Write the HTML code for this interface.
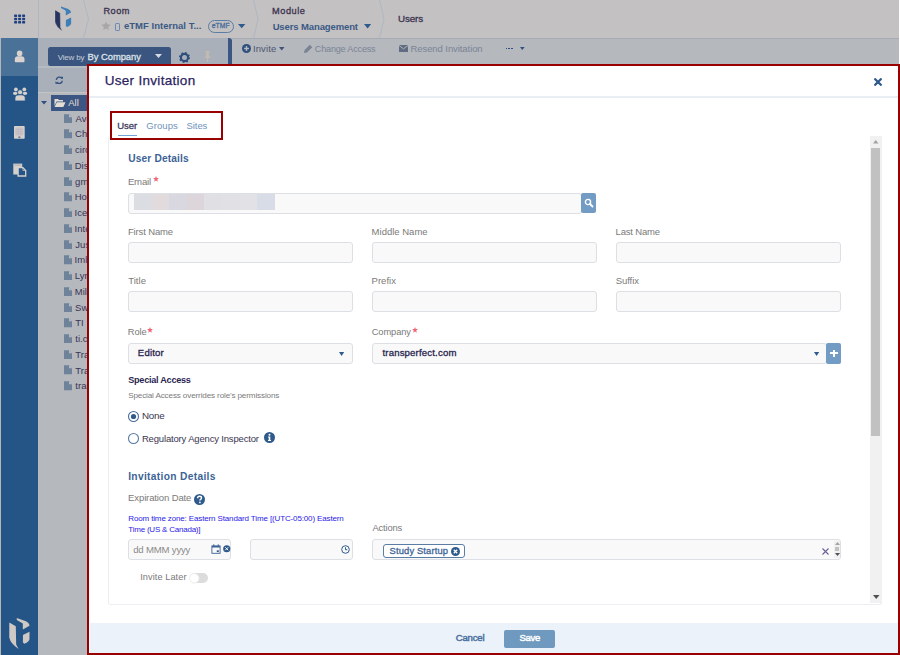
<!DOCTYPE html>
<html><head><meta charset="utf-8"><style>
html,body{margin:0;padding:0;width:900px;height:655px;overflow:hidden;position:relative;}
body{font-family:"Liberation Sans", sans-serif;}
.t{position:absolute;white-space:nowrap;}
.r{position:absolute;}
</style></head><body>
<div class="r" style="left:0px;top:0px;width:900px;height:655px;background:#b8babe"></div>
<div class="r" style="left:0px;top:0px;width:899px;height:38px;background:#c3c1c2"></div>
<div class="r" style="left:899px;top:0px;width:1px;height:64px;background:#ffffff"></div>
<div class="r" style="left:38px;top:0px;width:1px;height:38px;background:#adb7c4"></div>
<svg class="r" style="left:0;top:0" width="900" height="38"><g fill="none" stroke="#adb7c4" stroke-width="1"><polyline points="83.5,0 88.5,19 83.5,38"/><polyline points="253.5,0 258,19 253.5,38"/><polyline points="379.5,0 384,19 379.5,38"/></g></svg>
<svg class="r" style="left:0;top:0" width="38" height="38"><rect x="14.1" y="14.5" width="3" height="2.4" rx="0.6" fill="#203f80"/><rect x="14.1" y="17.8" width="3" height="2.4" rx="0.6" fill="#203f80"/><rect x="14.1" y="21.1" width="3" height="2.4" rx="0.6" fill="#203f80"/><rect x="18.1" y="14.5" width="3" height="2.4" rx="0.6" fill="#203f80"/><rect x="18.1" y="17.8" width="3" height="2.4" rx="0.6" fill="#203f80"/><rect x="18.1" y="21.1" width="3" height="2.4" rx="0.6" fill="#203f80"/><rect x="22.1" y="14.5" width="3" height="2.4" rx="0.6" fill="#203f80"/><rect x="22.1" y="17.8" width="3" height="2.4" rx="0.6" fill="#203f80"/><rect x="22.1" y="21.1" width="3" height="2.4" rx="0.6" fill="#203f80"/></svg>
<svg class="r" style="left:50px;top:4px" width="30" height="30" viewBox="0 0 30 30"><path d="M5,6 L10.2,9 L10.5,23.5 L12.4,27 Q6,23 5,18 Z" fill="#27345f" stroke="#d6d0cc" stroke-width="0.6" stroke-opacity="0.5"/><path d="M11,2.4 L18.3,5 Q21.1,6.5 21.1,8.5 L15.8,11.6 L15.8,6.8 L11,4 Z" fill="#3f7fb8"/><path d="M15.9,16 L21.1,13.4 L21.1,19.2 Q21,21.5 17,22.9 L15.9,22 Z" fill="#3f7fb8"/></svg>
<div class="t" style="left:103.44px;top:6.51px;font-size:9.2px;line-height:9.2px;color:#3b3350;letter-spacing:0.472px;-webkit-text-stroke:0.3px #3b3350;">Room</div>
<svg class="r" style="left:101.3px;top:21.3px" width="10" height="10" viewBox="0 0 24 24"><path d="M12 1l3.3 7 7.7.9-5.7 5.2 1.6 7.6L12 17.9 5.1 21.7l1.6-7.6L1 8.9 8.7 8z" fill="#a9a6a6"/></svg>
<div class="r" style="left:114.8px;top:22.7px;width:5.2px;height:8px;border:1.3px solid #6a8ab3;border-top-width:1.8px;border-bottom-width:1.8px;border-radius:1.2px;box-sizing:border-box"></div>
<div class="t" style="left:123.92px;top:21.26px;font-size:9.5px;line-height:9.5px;color:#3a5a85;font-weight:700;letter-spacing:0.027px;">eTMF Internal T...</div>
<div class="r" style="left:207.5px;top:20px;width:26.5px;height:13px;border:1px solid #5a7ca5;border-radius:7px;box-sizing:border-box"></div>
<div class="t" style="left:211.71px;top:22.84px;font-size:6.8px;line-height:6.8px;color:#4d6e99;letter-spacing:0.104px;-webkit-text-stroke:0.3px #4d6e99;">eTMF</div>
<svg class="r" style="left:237.5px;top:24px" width="8" height="5"><path d="M0,0 L7.4,0 L3.7,4.3 Z" fill="#2f5a8c"/></svg>
<div class="t" style="left:272.04px;top:6.61px;font-size:9.2px;line-height:9.2px;color:#3b3350;letter-spacing:0.559px;-webkit-text-stroke:0.3px #3b3350;">Module</div>
<div class="t" style="left:272.63px;top:21.56px;font-size:9.5px;line-height:9.5px;color:#3a5a85;font-weight:700;letter-spacing:-0.115px;">Users Management</div>
<svg class="r" style="left:363.8px;top:24.2px" width="8" height="5"><path d="M0,0 L7.2,0 L3.6,4.5 Z" fill="#2f5a8c"/></svg>
<div class="t" style="left:398.04px;top:13.90px;font-size:9.8px;line-height:9.8px;color:#3b3350;letter-spacing:-0.125px;-webkit-text-stroke:0.3px #3b3350;">Users</div>
<div class="r" style="left:0px;top:38px;width:38px;height:617px;background:#255586"></div>
<div class="r" style="left:0px;top:38px;width:1px;height:617px;background:#b3b5b8"></div>
<div class="r" style="left:1px;top:38px;width:37px;height:38px;background:#4a7198"></div>
<div class="r" style="left:38px;top:38px;width:1px;height:617px;background:#8fa0b4"></div>
<div class="r" style="left:39px;top:38px;width:1px;height:617px;background:#c5c5c7"></div>
<svg class="r" style="left:0px;top:38px" width="38" height="38" viewBox="0 0 38 38"><circle cx="19.6" cy="15.4" r="2.8" fill="#d9d2ce"/><path d="M14.8,23.6 Q14.8,24.2 15.5,24.2 H23.8 Q24.5,24.2 24.5,23.6 V21.5 Q24.5,18.2 21.3,18.2 H18 Q14.8,18.2 14.8,21.5 Z" fill="#d9d2ce"/></svg>
<svg class="r" style="left:12px;top:87px" width="16" height="15" viewBox="0 0 16 15"><circle cx="3.9" cy="2.4" r="1.9" fill="#d6d0cd"/><circle cx="12.3" cy="2.4" r="1.9" fill="#d6d0cd"/><ellipse cx="3.2" cy="6.3" rx="2.3" ry="1.6" fill="#d6d0cd"/><ellipse cx="13" cy="6.3" rx="2.3" ry="1.6" fill="#d6d0cd"/><circle cx="8.1" cy="5.3" r="2.5" fill="#d6d0cd" stroke="#255586" stroke-width="0.7"/><path d="M3,13.9 V10.8 Q3,7.9 6,7.9 H10.2 Q13.2,7.9 13.2,10.8 V13.9 Z" fill="#d6d0cd" stroke="#255586" stroke-width="0.7"/></svg>
<svg class="r" style="left:14px;top:125.5px" width="11" height="13" viewBox="0 0 11 13"><rect x="0" y="0" width="10.7" height="12.8" rx="0.8" fill="#d6d0cd"/><rect x="1.4" y="1.5" width="7.9" height="8" fill="#c9c3c6"/><path d="M1.4,3.5 H9.3 M1.4,5.5 H9.3 M1.4,7.5 H9.3 M4,1.5 V9.5 M6.7,1.5 V9.5" stroke="#b9b6c0" stroke-width="0.5"/><ellipse cx="5.35" cy="11.1" rx="1.3" ry="0.7" fill="#2a5a88"/></svg>
<svg class="r" style="left:13px;top:163px" width="14" height="14" viewBox="0 0 14 14"><rect x="0.3" y="0.6" width="8.9" height="10.9" fill="#d6d0cd"/><rect x="1.3" y="1.3" width="6.9" height="1.6" fill="#bdb8bb"/><path d="M5.1,4.6 H9.9 L12.7,7.4 V13 H5.1 Z" fill="#255586" stroke="#d6d0cd" stroke-width="1.3"/><path d="M9.9,4.6 V7.4 H12.7" fill="none" stroke="#d6d0cd" stroke-width="0.8"/></svg>
<svg class="r" style="left:2.5px;top:615.4px" width="37.65" height="37.65" viewBox="0 0 30 30"><path d="M5,6 L10.2,9 L10.5,23.5 L12.4,27 Q6,23 5,18 Z" fill="#cfc9c6"/><path d="M11,2.4 L18.3,5 Q21.1,6.5 21.1,8.5 L15.8,11.6 L15.8,6.8 L11,4 Z" fill="#cfc9c6"/><path d="M15.9,16 L21.1,13.4 L21.1,19.2 Q21,21.5 17,22.9 L15.9,22 Z" fill="#cfc9c6"/></svg>
<div class="r" style="left:38px;top:38px;width:190px;height:54px;background:#a9b0b9"></div>
<div class="r" style="left:38px;top:92px;width:190px;height:1px;background:#c3c4c6"></div>
<div class="r" style="left:38px;top:93px;width:190px;height:562px;background:#b5b8bd"></div>
<div class="r" style="left:38px;top:66px;width:190px;height:2px;background:#b6bbc2"></div>
<div class="r" style="left:48px;top:47px;width:123px;height:19px;background:#3a5580;border-radius:2.5px"></div>
<div class="t" style="left:57.76px;top:53.53px;font-size:8px;line-height:8px;color:#c9cfd9;letter-spacing:-0.200px;">View by</div>
<div class="t" style="left:87.62px;top:52.44px;font-size:9.4px;line-height:9.4px;color:#dde1e8;letter-spacing:-0.046px;-webkit-text-stroke:0.3px #dde1e8;">By Company</div>
<svg class="r" style="left:155px;top:54px" width="8" height="5"><path d="M0,0 L7,0 L3.5,4 Z" fill="#d5dae2"/></svg>
<svg class="r" style="left:179px;top:51.5px" width="11" height="11" viewBox="0 0 11 11"><circle cx="5.5" cy="5.5" r="3.6" fill="none" stroke="#2f4f7e" stroke-width="2.2"/><circle cx="5.5" cy="5.5" r="4.6" fill="none" stroke="#2f4f7e" stroke-width="1.8" stroke-dasharray="1.6 2.01"/></svg>
<svg class="r" style="left:203px;top:51px" width="9" height="11" viewBox="0 0 9 11"><path d="M2,0 H7 V1 H6 V5 L8,7 H1 L3,5 V1 H2 Z" fill="#c4bab4"/><rect x="4" y="7" width="1" height="4" fill="#c4bab4"/></svg>
<svg class="r" style="left:54.6px;top:75.6px" width="8.6" height="8.6" viewBox="0 0 10 10"><path d="M1.5,4.5 A3.5,3.5 0 0 1 8,3" fill="none" stroke="#2f4f7e" stroke-width="1.6"/><path d="M8.5,5.5 A3.5,3.5 0 0 1 2,7" fill="none" stroke="#2f4f7e" stroke-width="1.6"/><path d="M6.5,1 L9.5,1 L9.5,4 Z" fill="#2f4f7e"/><path d="M3.5,9 L0.5,9 L0.5,6 Z" fill="#2f4f7e"/></svg>
<svg class="r" style="left:41px;top:101px" width="6" height="4"><path d="M0,0 L6,0 L3,3.5 Z" fill="#2f4f7e"/></svg>
<div class="r" style="left:51px;top:95px;width:40px;height:16px;background:#3b5682"></div>
<svg class="r" style="left:54px;top:98px" width="12" height="10" viewBox="0 0 12 10"><path d="M0.5,1 H4 L5,2 H9 V3.5 H2.5 L0.5,8 Z" fill="#e3ddd4"/><path d="M2.8,4.3 H11.5 L9.3,9 H0.6 Z" fill="#e3ddd4"/></svg>
<div class="t" style="left:68.18px;top:98.37px;font-size:9.6px;line-height:9.6px;color:#e3ddd4;letter-spacing:0.046px;">All</div>
<svg class="r" style="left:64px;top:113.6px" width="8.2" height="9.4" viewBox="0 0 9 10"><path d="M0,0 H5.5 L9,3.5 V10 H0 Z" fill="#6e8399"/><path d="M5.5,0 V3.5 H9 Z" fill="#b5bcc4"/></svg>
<div class="t" style="left:75.48px;top:113.66px;font-size:9.5px;line-height:9.5px;color:#3a3356;">Avengers</div>
<svg class="r" style="left:64px;top:129.3px" width="8.2" height="9.4" viewBox="0 0 9 10"><path d="M0,0 H5.5 L9,3.5 V10 H0 Z" fill="#6e8399"/><path d="M5.5,0 V3.5 H9 Z" fill="#b5bcc4"/></svg>
<div class="t" style="left:75.03px;top:129.40px;font-size:9.5px;line-height:9.5px;color:#3a3356;">Chicago</div>
<svg class="r" style="left:64px;top:145.1px" width="8.2" height="9.4" viewBox="0 0 9 10"><path d="M0,0 H5.5 L9,3.5 V10 H0 Z" fill="#6e8399"/><path d="M5.5,0 V3.5 H9 Z" fill="#b5bcc4"/></svg>
<div class="t" style="left:75.10px;top:145.14px;font-size:9.5px;line-height:9.5px;color:#3a3356;">circle</div>
<svg class="r" style="left:64px;top:160.8px" width="8.2" height="9.4" viewBox="0 0 9 10"><path d="M0,0 H5.5 L9,3.5 V10 H0 Z" fill="#6e8399"/><path d="M5.5,0 V3.5 H9 Z" fill="#b5bcc4"/></svg>
<div class="t" style="left:74.72px;top:160.88px;font-size:9.5px;line-height:9.5px;color:#3a3356;">Discovery</div>
<svg class="r" style="left:64px;top:176.6px" width="8.2" height="9.4" viewBox="0 0 9 10"><path d="M0,0 H5.5 L9,3.5 V10 H0 Z" fill="#6e8399"/><path d="M5.5,0 V3.5 H9 Z" fill="#b5bcc4"/></svg>
<div class="t" style="left:75.10px;top:176.62px;font-size:9.5px;line-height:9.5px;color:#3a3356;">gmail</div>
<svg class="r" style="left:64px;top:192.3px" width="8.2" height="9.4" viewBox="0 0 9 10"><path d="M0,0 H5.5 L9,3.5 V10 H0 Z" fill="#6e8399"/><path d="M5.5,0 V3.5 H9 Z" fill="#b5bcc4"/></svg>
<div class="t" style="left:74.72px;top:192.36px;font-size:9.5px;line-height:9.5px;color:#3a3356;">Horizon</div>
<svg class="r" style="left:64px;top:208.0px" width="8.2" height="9.4" viewBox="0 0 9 10"><path d="M0,0 H5.5 L9,3.5 V10 H0 Z" fill="#6e8399"/><path d="M5.5,0 V3.5 H9 Z" fill="#b5bcc4"/></svg>
<div class="t" style="left:74.62px;top:208.10px;font-size:9.5px;line-height:9.5px;color:#3a3356;">Iceland</div>
<svg class="r" style="left:64px;top:223.8px" width="8.2" height="9.4" viewBox="0 0 9 10"><path d="M0,0 H5.5 L9,3.5 V10 H0 Z" fill="#6e8399"/><path d="M5.5,0 V3.5 H9 Z" fill="#b5bcc4"/></svg>
<div class="t" style="left:74.62px;top:223.84px;font-size:9.5px;line-height:9.5px;color:#3a3356;">International</div>
<svg class="r" style="left:64px;top:239.5px" width="8.2" height="9.4" viewBox="0 0 9 10"><path d="M0,0 H5.5 L9,3.5 V10 H0 Z" fill="#6e8399"/><path d="M5.5,0 V3.5 H9 Z" fill="#b5bcc4"/></svg>
<div class="t" style="left:75.36px;top:239.58px;font-size:9.5px;line-height:9.5px;color:#3a3356;">Justice</div>
<svg class="r" style="left:64px;top:255.3px" width="8.2" height="9.4" viewBox="0 0 9 10"><path d="M0,0 H5.5 L9,3.5 V10 H0 Z" fill="#6e8399"/><path d="M5.5,0 V3.5 H9 Z" fill="#b5bcc4"/></svg>
<div class="t" style="left:74.62px;top:255.32px;font-size:9.5px;line-height:9.5px;color:#3a3356;">Imlay</div>
<svg class="r" style="left:64px;top:271.0px" width="8.2" height="9.4" viewBox="0 0 9 10"><path d="M0,0 H5.5 L9,3.5 V10 H0 Z" fill="#6e8399"/><path d="M5.5,0 V3.5 H9 Z" fill="#b5bcc4"/></svg>
<div class="t" style="left:74.72px;top:271.06px;font-size:9.5px;line-height:9.5px;color:#3a3356;">Lynx</div>
<svg class="r" style="left:64px;top:286.7px" width="8.2" height="9.4" viewBox="0 0 9 10"><path d="M0,0 H5.5 L9,3.5 V10 H0 Z" fill="#6e8399"/><path d="M5.5,0 V3.5 H9 Z" fill="#b5bcc4"/></svg>
<div class="t" style="left:74.72px;top:286.80px;font-size:9.5px;line-height:9.5px;color:#3a3356;">Milestone</div>
<svg class="r" style="left:64px;top:302.5px" width="8.2" height="9.4" viewBox="0 0 9 10"><path d="M0,0 H5.5 L9,3.5 V10 H0 Z" fill="#6e8399"/><path d="M5.5,0 V3.5 H9 Z" fill="#b5bcc4"/></svg>
<div class="t" style="left:75.07px;top:302.54px;font-size:9.5px;line-height:9.5px;color:#3a3356;">Swiss</div>
<svg class="r" style="left:64px;top:318.2px" width="8.2" height="9.4" viewBox="0 0 9 10"><path d="M0,0 H5.5 L9,3.5 V10 H0 Z" fill="#6e8399"/><path d="M5.5,0 V3.5 H9 Z" fill="#b5bcc4"/></svg>
<div class="t" style="left:75.29px;top:318.28px;font-size:9.5px;line-height:9.5px;color:#3a3356;">TI</div>
<svg class="r" style="left:64px;top:334.0px" width="8.2" height="9.4" viewBox="0 0 9 10"><path d="M0,0 H5.5 L9,3.5 V10 H0 Z" fill="#6e8399"/><path d="M5.5,0 V3.5 H9 Z" fill="#b5bcc4"/></svg>
<div class="t" style="left:75.36px;top:334.02px;font-size:9.5px;line-height:9.5px;color:#3a3356;">ti.com</div>
<svg class="r" style="left:64px;top:349.7px" width="8.2" height="9.4" viewBox="0 0 9 10"><path d="M0,0 H5.5 L9,3.5 V10 H0 Z" fill="#6e8399"/><path d="M5.5,0 V3.5 H9 Z" fill="#b5bcc4"/></svg>
<div class="t" style="left:75.29px;top:349.76px;font-size:9.5px;line-height:9.5px;color:#3a3356;">Transperfect</div>
<svg class="r" style="left:64px;top:365.4px" width="8.2" height="9.4" viewBox="0 0 9 10"><path d="M0,0 H5.5 L9,3.5 V10 H0 Z" fill="#6e8399"/><path d="M5.5,0 V3.5 H9 Z" fill="#b5bcc4"/></svg>
<div class="t" style="left:75.29px;top:365.50px;font-size:9.5px;line-height:9.5px;color:#3a3356;">Travel</div>
<svg class="r" style="left:64px;top:381.2px" width="8.2" height="9.4" viewBox="0 0 9 10"><path d="M0,0 H5.5 L9,3.5 V10 H0 Z" fill="#6e8399"/><path d="M5.5,0 V3.5 H9 Z" fill="#b5bcc4"/></svg>
<div class="t" style="left:75.36px;top:381.24px;font-size:9.5px;line-height:9.5px;color:#3a3356;">transperfect</div>
<div class="r" style="left:228px;top:38px;width:4px;height:26px;background:#3b5682;border-top-right-radius:3px"></div>
<div class="r" style="left:232px;top:38px;width:667px;height:26px;background:#b5b8bd"></div>
<div class="r" style="left:232px;top:38px;width:667px;height:1px;background:#a7abb3"></div>
<svg class="r" style="left:242px;top:44px" width="9" height="9" viewBox="0 0 10 10"><circle cx="5" cy="5" r="5" fill="#2f4f7e"/><rect x="2.3" y="4.2" width="5.4" height="1.6" fill="#b8bbbf"/><rect x="4.2" y="2.3" width="1.6" height="5.4" fill="#b8bbbf"/></svg>
<div class="t" style="left:252.92px;top:44.46px;font-size:9.5px;line-height:9.5px;color:#4f5670;letter-spacing:0.116px;">Invite</div>
<svg class="r" style="left:279px;top:47px" width="6" height="4"><path d="M0,0 L5.5,0 L2.75,3.5 Z" fill="#3f5275"/></svg>
<svg class="r" style="left:304px;top:44px" width="8" height="9" viewBox="0 0 8 9"><path d="M0,9 L0.6,6 L5.8,0.8 L8.2,3.2 L3,8.4 Z" fill="#7a8496"/></svg>
<div class="t" style="left:314.85px;top:44.88px;font-size:9.0px;line-height:9.0px;color:#7a8496;letter-spacing:-0.149px;">Change Access</div>
<svg class="r" style="left:399px;top:45px" width="9" height="7" viewBox="0 0 9 7"><rect x="0" y="0" width="9" height="7" fill="#5f6c82"/><path d="M0,0.5 L4.5,3.8 L9,0.5" fill="none" stroke="#b8bbbf" stroke-width="0.9"/></svg>
<div class="t" style="left:410.52px;top:44.46px;font-size:9.5px;line-height:9.5px;color:#7a8496;letter-spacing:-0.080px;">Resend Invitation</div>
<div class="r" style="left:505.5px;top:47.5px;width:1.6px;height:1.6px;background:#2f4f7e"></div>
<div class="r" style="left:508.3px;top:47.5px;width:1.6px;height:1.6px;background:#2f4f7e"></div>
<div class="r" style="left:511.1px;top:47.5px;width:1.6px;height:1.6px;background:#2f4f7e"></div>
<svg class="r" style="left:519.5px;top:47.3px" width="6" height="4"><path d="M0,0 L4.6,0 L2.3,3 Z" fill="#2f4f7e"/></svg>
<div class="r" style="left:87px;top:64px;width:813px;height:591px;background:#9b0000"></div>
<div class="r" style="left:89px;top:66px;width:809px;height:587px;background:#ffffff"></div>
<div class="t" style="left:104.65px;top:73.87px;font-size:13.5px;line-height:13.5px;color:#2b2360;letter-spacing:0.304px;-webkit-text-stroke:0.25px #2b2360;">User Invitation</div>
<svg class="r" style="left:874px;top:78px" width="8" height="8" viewBox="0 0 8 8"><path d="M1.2,1.2 L6.8,6.8 M6.8,1.2 L1.2,6.8" stroke="#2f5a8c" stroke-width="2.3" stroke-linecap="round"/></svg>
<div class="r" style="left:89px;top:96px;width:809px;height:2px;background:#e8eef3"></div>
<div class="r" style="left:108px;top:136px;width:774px;height:469px;border:1px solid #eceef1;border-radius:3px;box-sizing:border-box;border-top-color:#ffffff"></div>
<div class="r" style="left:870px;top:136px;width:12px;height:467px;background:#f1f1f1"></div>
<div class="r" style="left:871px;top:148px;width:9px;height:288px;background:#c1c1c1"></div>
<svg class="r" style="left:873px;top:140px" width="6" height="4"><path d="M0,3.5 L5.5,3.5 L2.75,0 Z" fill="#a3a3a3"/></svg>
<svg class="r" style="left:872.5px;top:595px" width="7" height="5"><path d="M0,0 L6.5,0 L3.25,4 Z" fill="#505050"/></svg>
<div class="r" style="left:110px;top:111px;width:113px;height:29px;border:2px solid #990000;box-sizing:border-box"></div>
<div class="t" style="left:117.26px;top:120.56px;font-size:9.5px;line-height:9.5px;color:#3d3a5c;letter-spacing:-0.055px;-webkit-text-stroke:0.3px #3d3a5c;">User</div>
<div class="r" style="left:118px;top:134.6px;width:19px;height:1.4px;background:#74a4d6"></div>
<div class="t" style="left:146.33px;top:120.96px;font-size:9.5px;line-height:9.5px;color:#6f93bd;letter-spacing:0.049px;">Groups</div>
<div class="t" style="left:186.57px;top:120.96px;font-size:9.5px;line-height:9.5px;color:#6f93bd;letter-spacing:-0.088px;">Sites</div>
<div class="t" style="left:128.29px;top:153.97px;font-size:10.2px;line-height:10.2px;color:#3d6396;font-weight:700;letter-spacing:0.133px;">User Details</div>
<div class="t" style="left:127.91px;top:177.17px;font-size:9.6px;line-height:9.6px;color:#7a7a7a;letter-spacing:-0.190px;">Email</div>
<svg class="r" style="left:153px;top:176.2px" width="6" height="6" viewBox="0 0 10 10"><path d="M5,0 L6.3,3.3 L9.9,3.5 L7.1,5.8 L8.1,9.4 L5,7.4 L1.9,9.4 L2.9,5.8 L0.1,3.5 L3.7,3.3 Z" fill="#f06474"/></svg>
<div class="r" style="left:128px;top:193px;width:454px;height:21px;background:#f9f9f9;border:1px solid #dcdfe3;border-radius:3px;box-sizing:border-box"></div>
<div class="r" style="left:134.0px;top:194px;width:18px;height:16px;background:#dcdce3"></div>
<div class="r" style="left:151.6px;top:194px;width:18px;height:16px;background:#e1dbdd"></div>
<div class="r" style="left:169.2px;top:194px;width:18px;height:16px;background:#d9d7df"></div>
<div class="r" style="left:186.8px;top:194px;width:18px;height:16px;background:#dcd6da"></div>
<div class="r" style="left:204.4px;top:194px;width:18px;height:16px;background:#dfdfe4"></div>
<div class="r" style="left:222.0px;top:194px;width:18px;height:16px;background:#e1e1e5"></div>
<div class="r" style="left:239.60000000000002px;top:194px;width:18px;height:16px;background:#e2e2e6"></div>
<div class="r" style="left:257.20000000000005px;top:194px;width:18px;height:16px;background:#d8dce6"></div>
<div class="r" style="left:581px;top:193px;width:15px;height:20px;background:#739cc4;border-radius:2px"></div>
<svg class="r" style="left:584px;top:198px" width="10" height="10" viewBox="0 0 10 10"><circle cx="4" cy="4" r="2.6" fill="none" stroke="#fff" stroke-width="1.4"/><path d="M6,6 L8.5,8.5" stroke="#fff" stroke-width="1.8" stroke-linecap="round"/></svg>
<div class="t" style="left:127.92px;top:226.86px;font-size:9.5px;line-height:9.5px;color:#7a7a7a;letter-spacing:-0.138px;">First Name</div>
<div class="t" style="left:371.62px;top:226.86px;font-size:9.5px;line-height:9.5px;color:#7a7a7a;letter-spacing:0.003px;">Middle Name</div>
<div class="t" style="left:615.62px;top:226.86px;font-size:9.5px;line-height:9.5px;color:#7a7a7a;letter-spacing:-0.193px;">Last Name</div>
<div class="r" style="left:128px;top:242px;width:225px;height:21px;background:#f9f9f9;border:1px solid #dcdfe3;border-radius:3px;box-sizing:border-box"></div>
<div class="r" style="left:372px;top:242px;width:225px;height:21px;background:#f9f9f9;border:1px solid #dcdfe3;border-radius:3px;box-sizing:border-box"></div>
<div class="r" style="left:616px;top:242px;width:225px;height:21px;background:#f9f9f9;border:1px solid #dcdfe3;border-radius:3px;box-sizing:border-box"></div>
<div class="t" style="left:128.29px;top:276.06px;font-size:9.5px;line-height:9.5px;color:#7a7a7a;letter-spacing:0.011px;">Title</div>
<div class="t" style="left:371.62px;top:276.06px;font-size:9.5px;line-height:9.5px;color:#7a7a7a;letter-spacing:0.006px;">Prefix</div>
<div class="t" style="left:615.77px;top:276.06px;font-size:9.5px;line-height:9.5px;color:#7a7a7a;letter-spacing:-0.088px;">Suffix</div>
<div class="r" style="left:128px;top:291px;width:225px;height:21px;background:#f9f9f9;border:1px solid #dcdfe3;border-radius:3px;box-sizing:border-box"></div>
<div class="r" style="left:372px;top:291px;width:225px;height:21px;background:#f9f9f9;border:1px solid #dcdfe3;border-radius:3px;box-sizing:border-box"></div>
<div class="r" style="left:616px;top:291px;width:225px;height:21px;background:#f9f9f9;border:1px solid #dcdfe3;border-radius:3px;box-sizing:border-box"></div>
<div class="t" style="left:127.73px;top:328.03px;font-size:9.3px;line-height:9.3px;color:#7a7a7a;letter-spacing:-0.050px;">Role</div>
<svg class="r" style="left:146.5px;top:327.3px" width="6" height="6" viewBox="0 0 10 10"><path d="M5,0 L6.3,3.3 L9.9,3.5 L7.1,5.8 L8.1,9.4 L5,7.4 L1.9,9.4 L2.9,5.8 L0.1,3.5 L3.7,3.3 Z" fill="#f06474"/></svg>
<div class="t" style="left:371.74px;top:327.93px;font-size:9.3px;line-height:9.3px;color:#7a7a7a;letter-spacing:-0.086px;">Company</div>
<svg class="r" style="left:411.5px;top:327px" width="6" height="6" viewBox="0 0 10 10"><path d="M5,0 L6.3,3.3 L9.9,3.5 L7.1,5.8 L8.1,9.4 L5,7.4 L1.9,9.4 L2.9,5.8 L0.1,3.5 L3.7,3.3 Z" fill="#f06474"/></svg>
<div class="r" style="left:128px;top:343px;width:225px;height:21px;background:#f9f9f9;border:1px solid #dcdfe3;border-radius:3px;box-sizing:border-box"></div>
<div class="t" style="left:137.81px;top:348.47px;font-size:9.6px;line-height:9.6px;color:#2a2550;letter-spacing:0.191px;-webkit-text-stroke:0.3px #2a2550;">Editor</div>
<svg class="r" style="left:339px;top:351.5px" width="6" height="5"><path d="M0,0 L5.2,0 L2.6,4 Z" fill="#2f5a8c"/></svg>
<div class="r" style="left:372px;top:343px;width:455px;height:21px;background:#f9f9f9;border:1px solid #dcdfe3;border-radius:3px;box-sizing:border-box"></div>
<div class="t" style="left:382.46px;top:348.47px;font-size:9.6px;line-height:9.6px;color:#2a2550;letter-spacing:0.165px;-webkit-text-stroke:0.3px #2a2550;">transperfect.com</div>
<svg class="r" style="left:814px;top:351.5px" width="6" height="5"><path d="M0,0 L5.2,0 L2.6,4 Z" fill="#2f5a8c"/></svg>
<div class="r" style="left:826px;top:343px;width:15px;height:21px;background:#739cc4;border-radius:2px"></div>
<div class="r" style="left:830px;top:352.3px;width:7.5px;height:2px;background:#fff"></div>
<div class="r" style="left:832.75px;top:349.5px;width:2px;height:7.5px;background:#fff"></div>
<div class="t" style="left:128.23px;top:376.40px;font-size:9.1px;line-height:9.1px;color:#2a2550;font-weight:700;letter-spacing:-0.246px;">Special Access</div>
<div class="t" style="left:128.14px;top:392.34px;font-size:8.1px;line-height:8.1px;color:#7a7a7a;letter-spacing:-0.131px;">Special Access overrides role's permissions</div>
<svg class="r" style="left:127px;top:410px" width="13" height="13" viewBox="0 0 13 13"><circle cx="6.5" cy="6.5" r="5" fill="#fff" stroke="#4a6fa0" stroke-width="1.1"/><circle cx="6.5" cy="6.5" r="2.6" fill="#2f5a8c"/></svg>
<div class="t" style="left:141.89px;top:411.10px;font-size:9.8px;line-height:9.8px;color:#3a3550;letter-spacing:-0.166px;">None</div>
<svg class="r" style="left:127px;top:432px" width="13" height="13" viewBox="0 0 13 13"><circle cx="6.5" cy="6.5" r="5" fill="#fff" stroke="#5a7aa5" stroke-width="1.1"/></svg>
<div class="t" style="left:141.92px;top:433.66px;font-size:9.5px;line-height:9.5px;color:#3a3550;letter-spacing:-0.167px;">Regulatory Agency Inspector</div>
<svg class="r" style="left:263.5px;top:431.5px" width="11" height="11" viewBox="0 0 11 11"><circle cx="5.5" cy="5.5" r="5.5" fill="#2f5a8c"/><circle cx="5.5" cy="2.8" r="1" fill="#fff"/><path d="M4,4.5 H6.3 V8 H7 V9 H4 V8 H4.7 V5.5 H4 Z" fill="#fff"/></svg>
<div class="t" style="left:128.21px;top:472.47px;font-size:10.2px;line-height:10.2px;color:#3d6396;font-weight:700;letter-spacing:0.335px;">Invitation Details</div>
<div class="t" style="left:128.12px;top:493.06px;font-size:9.5px;line-height:9.5px;color:#7a7a7a;letter-spacing:-0.118px;">Expiration Date</div>
<svg class="r" style="left:193.5px;top:493.5px" width="11" height="11" viewBox="0 0 11 11"><circle cx="5.5" cy="5.5" r="5.5" fill="#2f5a8c"/><path d="M3.6,4.2 Q3.6,2.2 5.6,2.2 Q7.5,2.2 7.5,3.9 Q7.5,5 6.3,5.6 Q5.9,5.9 5.9,6.6" fill="none" stroke="#fff" stroke-width="1.4"/><circle cx="5.9" cy="8.4" r="0.85" fill="#fff"/></svg>
<div class="t" style="left:128.24px;top:514.93px;font-size:8.0px;line-height:8.0px;color:#2a22e8;letter-spacing:-0.134px;">Room time zone: Eastern Standard Time [(UTC-05:00) Eastern</div>
<div class="t" style="left:128.32px;top:525.83px;font-size:8.0px;line-height:8.0px;color:#2a22e8;letter-spacing:-0.219px;">Time (US &amp; Canada)]</div>
<div class="r" style="left:128px;top:539px;width:103px;height:21px;background:#f9f9f9;border:1px solid #dcdfe3;border-radius:3px;box-sizing:border-box"></div>
<div class="t" style="left:133.19px;top:544.57px;font-size:9.6px;line-height:9.6px;color:#8a8a8a;letter-spacing:-0.198px;">dd MMM yyyy</div>
<svg class="r" style="left:211px;top:544px" width="10" height="10" viewBox="0 0 10 10"><rect x="0.9" y="1.9" width="8.2" height="7.4" fill="none" stroke="#3d6396" stroke-width="0.9"/><rect x="0.9" y="1.9" width="8.2" height="1.6" fill="#3d6396"/><rect x="2.3" y="0.3" width="1" height="2.2" fill="#3d6396"/><rect x="6.7" y="0.3" width="1" height="2.2" fill="#3d6396"/><rect x="5.8" y="6.3" width="2" height="1.8" fill="#2f5a8c"/></svg>
<svg class="r" style="left:222.5px;top:545px" width="8" height="8" viewBox="0 0 8 8"><circle cx="3.75" cy="3.75" r="3.6" fill="#2f5a8c"/><path d="M2.3,2.3 L5.2,5.2 M5.2,2.3 L2.3,5.2" stroke="#fff" stroke-width="1"/></svg>
<div class="r" style="left:250px;top:539px;width:103px;height:21px;background:#f9f9f9;border:1px solid #dcdfe3;border-radius:3px;box-sizing:border-box"></div>
<svg class="r" style="left:341px;top:545px" width="9" height="9" viewBox="0 0 9 9"><circle cx="4.5" cy="4.5" r="3.8" fill="none" stroke="#2f5a8c" stroke-width="1"/><path d="M4.5,2.3 V4.7 H6.3" fill="none" stroke="#2f5a8c" stroke-width="1"/></svg>
<div class="t" style="left:372.48px;top:523.24px;font-size:9.4px;line-height:9.4px;color:#7a7a7a;letter-spacing:-0.180px;">Actions</div>
<div class="r" style="left:372px;top:539px;width:469px;height:21px;background:#f9f9f9;border:1px solid #dcdfe3;border-radius:3px;box-sizing:border-box"></div>
<div class="r" style="left:383px;top:544px;width:82px;height:14px;background:#fff;border:1px solid #5a7ca5;border-radius:3px;box-sizing:border-box"></div>
<div class="t" style="left:389.58px;top:545.74px;font-size:9.4px;line-height:9.4px;color:#3d6396;letter-spacing:0.138px;-webkit-text-stroke:0.3px #3d6396;">Study Startup</div>
<svg class="r" style="left:451px;top:546.5px" width="9" height="9" viewBox="0 0 9 9"><circle cx="4.5" cy="4.5" r="4.5" fill="#2f5a8c"/><path d="M2.8,2.8 L6.2,6.2 M6.2,2.8 L2.8,6.2" stroke="#fff" stroke-width="1.3"/></svg>
<svg class="r" style="left:821.5px;top:548px" width="7" height="7" viewBox="0 0 7 7"><path d="M0.5,0.5 L6.5,6.5 M6.5,0.5 L0.5,6.5" stroke="#6b5f9a" stroke-width="1.1"/></svg>
<div class="r" style="left:834px;top:541px;width:6px;height:17px;background:#f1f1f1"></div>
<svg class="r" style="left:834.5px;top:542px" width="5" height="3"><path d="M0,3 L5,3 L2.5,0 Z" fill="#a3a3a3"/></svg>
<div class="r" style="left:835px;top:547px;width:4px;height:4px;background:#c1c1c1"></div>
<svg class="r" style="left:834.5px;top:553px" width="5" height="3"><path d="M0,0 L5,0 L2.5,3 Z" fill="#505050"/></svg>
<div class="t" style="left:140.15px;top:573.01px;font-size:9.2px;line-height:9.2px;color:#7a7a7a;letter-spacing:0.079px;">Invite Later</div>
<div class="r" style="left:189.5px;top:573px;width:18px;height:9.5px;background:#dcdcdc;border-radius:5px"></div>
<svg class="r" style="left:188px;top:571.5px" width="13" height="13"><circle cx="6.3" cy="6.3" r="4.8" fill="#fff" stroke="#e6e6e6" stroke-width="0.8"/></svg>
<div class="r" style="left:90px;top:623px;width:808px;height:30px;background:#ebf2f9"></div>
<div class="t" style="left:455.82px;top:633.47px;font-size:9.6px;line-height:9.6px;color:#4a6fa0;letter-spacing:-0.230px;-webkit-text-stroke:0.45px #4a6fa0;">Cancel</div>
<div class="r" style="left:504px;top:630px;width:51px;height:18px;background:#7099c0;border-radius:2px"></div>
<div class="t" style="left:519.47px;top:633.47px;font-size:9.6px;line-height:9.6px;color:#ffffff;letter-spacing:-0.341px;-webkit-text-stroke:0.45px #ffffff;">Save</div>
</body></html>
